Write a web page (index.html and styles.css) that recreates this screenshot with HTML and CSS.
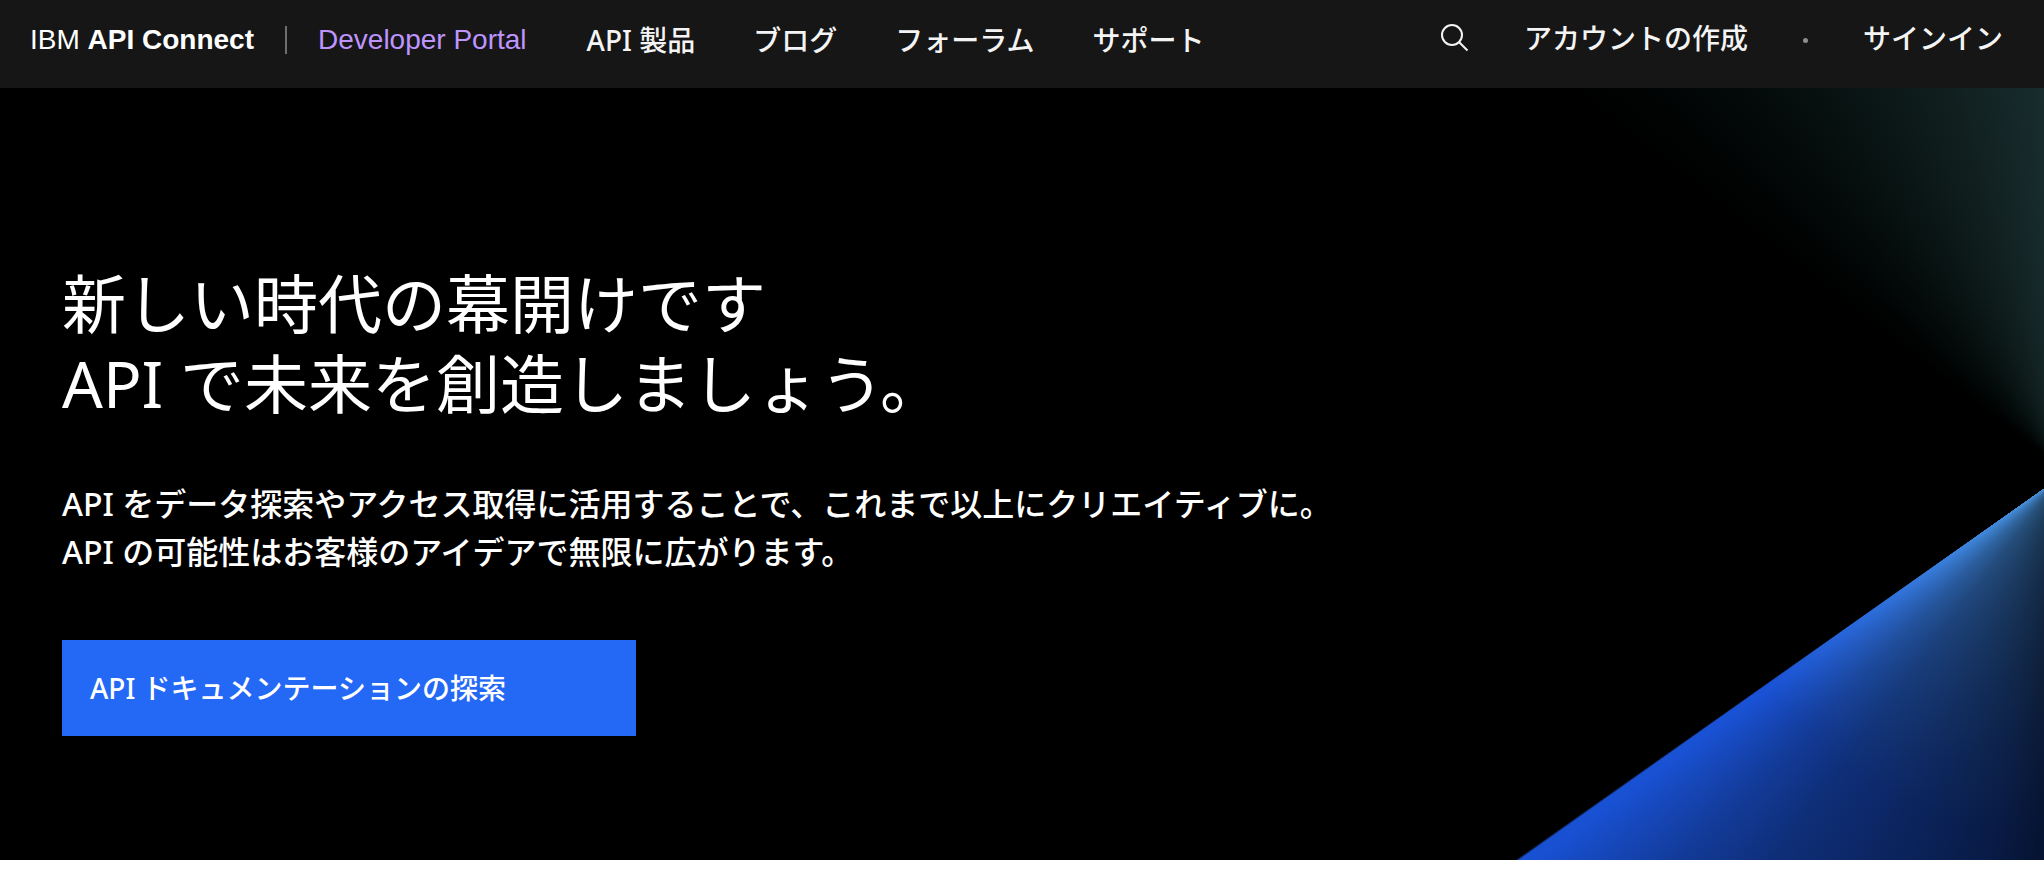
FILE: index.html
```html
<!DOCTYPE html>
<html lang="ja">
<head>
<meta charset="utf-8">
<meta name="viewport" content="width=device-width, initial-scale=1">
<title>IBM API Connect Developer Portal</title>
<link rel="stylesheet" href="styles.css">
</head>
<body>
<header class="site-header">
  <a class="brand" href="#"><span>IBM <b>API Connect</b></span><span class="brand-divider"></span><span class="brand-portal">Developer Portal</span></a>
  <nav class="main-nav">
    <a href="#">API 製品</a>
    <a href="#">ブログ</a>
    <a href="#">フォーラム</a>
    <a href="#">サポート</a>
  </nav>
  <div class="account">
    <button class="search" type="button" aria-label="検索">
      <svg class="search-icon" viewBox="0 0 28 28" aria-hidden="true"><circle cx="11" cy="11" r="10"/><path d="M18.2 18.2l8.3 8.3"/></svg>
    </button>
    <a href="#">アカウントの作成</a>
    <span class="dot"></span>
    <a href="#">サインイン</a>
  </div>
</header>
<main class="hero">
  <h1 class="hero-title">新しい時代の幕開けです<br>API で未来を創造しましょう。</h1>
  <p class="hero-text">API をデータ探索やアクセス取得に活用することで、これまで以上にクリエイティブに。<br>API の可能性はお客様のアイデアで無限に広がります。</p>
  <a class="hero-button" href="#">API ドキュメンテーションの探索</a>
</main>
</body>
</html>
```

FILE: styles.css
```css
* {
  box-sizing: border-box;
}

body {
  margin: 0;
  background: #fff;
  color: #fff;
  font-family: "Noto Sans", "Noto Sans CJK JP", sans-serif;
  font-size: 28px;
  font-weight: 500;
  line-height: 40px;
}

a {
  color: inherit;
  text-decoration: none;
  white-space: nowrap;
}

.site-header {
  display: flex;
  align-items: center;
  gap: 60px;
  min-height: 88px;
  padding: 0 41px 8px 30px;
  background: #161616;
  color: #f4f4f4;
}

.brand {
  display: flex;
  align-items: center;
  color: #fff;
  font-family: "Liberation Sans", Arial, sans-serif;
}

.brand-divider {
  width: 2px;
  height: 28px;
  margin: 0 31px;
  background: #6f6f6f;
}

.brand-portal {
  color: #be95ff;
}

.main-nav {
  display: flex;
  gap: 58px;
}

.account {
  display: flex;
  align-items: center;
  gap: 55px;
  margin-left: auto;
  padding-bottom: 4px;
}

.search {
  display: flex;
  padding: 0;
  border: 0;
  background: none;
  color: inherit;
}

.search-icon {
  width: 28px;
  height: 28px;
  fill: none;
  stroke: currentColor;
  stroke-width: 2;
}

.dot {
  width: 5px;
  height: 5px;
  margin-top: 4px;
  border-radius: 50%;
  background: #8d8d8d;
}

.hero {
  min-height: 772px;
  padding: 176px 62px 124px;
  background:
    conic-gradient(from 0deg at calc(100% + 16px) 379px,
      transparent 0deg 306deg, #000 307deg, #010303 312deg, #030808 318deg, #06100f 326deg,
      #0b1817 335deg, #11201f 344deg, #182b2d 357deg, #1b3034 360deg),
    conic-gradient(from 180deg at calc(100% + 16px) 389px,
      rgba(0, 0, 0, .8) 0deg, rgba(0, 0, 0, .68) 10deg, rgba(0, 0, 0, .55) 25deg,
      rgba(0, 0, 0, .43) 37deg, rgba(0, 0, 0, .28) 45deg, rgba(0, 0, 0, .1) 51deg,
      transparent 54deg, transparent 54.7deg, #000 54.9deg, #000 360deg),
    radial-gradient(circle at calc(100% + 16px) 389px,
      #4a96d8 0, #3b80da 130px, #2c6cd8 230px, #1a52d5 360px, #1850d2 700px);
}

.hero-title {
  margin: 0;
  font-size: 64px;
  font-weight: 400;
  line-height: 80px;
}

.hero-text {
  margin: 56px 0 64px;
  font-size: 32px;
  line-height: 48px;
}

.hero-button {
  display: flex;
  align-items: center;
  width: 574px;
  max-width: 100%;
  min-height: 96px;
  padding: 0 28px;
  background: #2468f6;
}
```
